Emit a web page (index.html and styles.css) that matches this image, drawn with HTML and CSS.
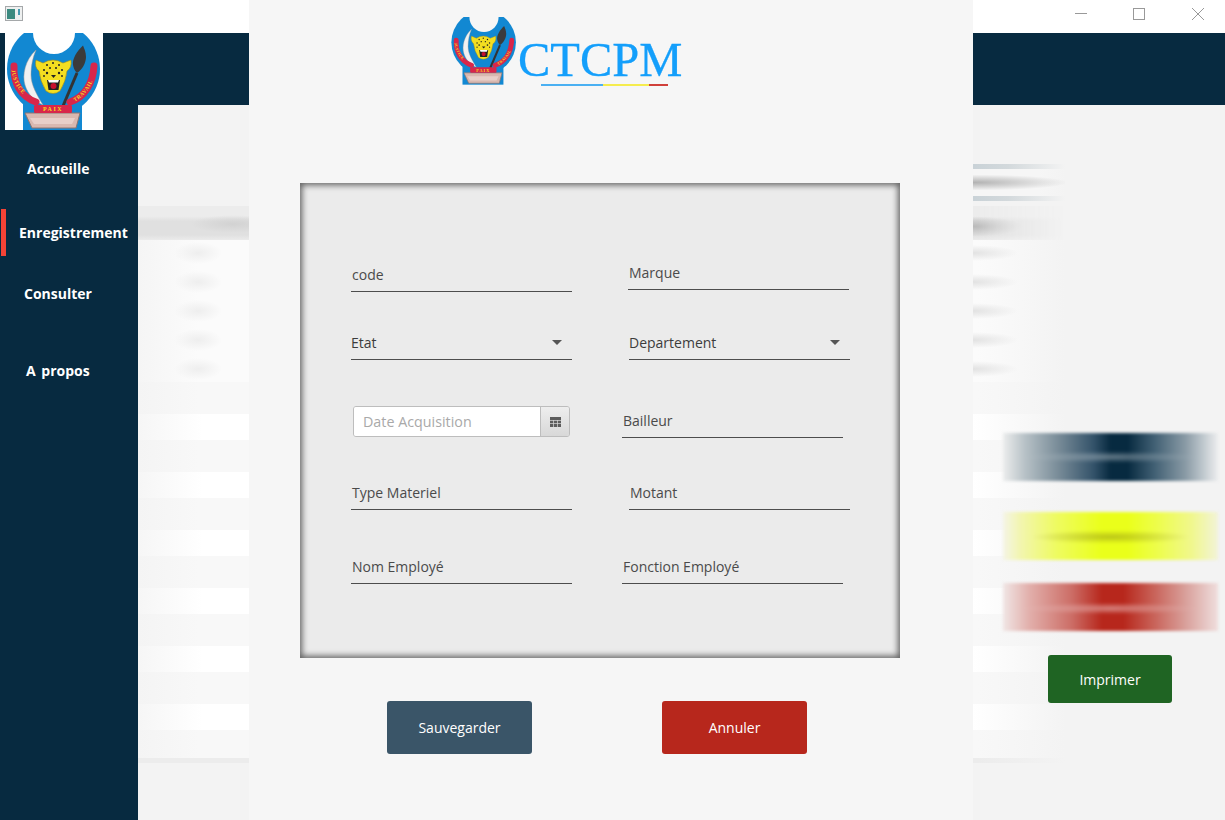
FILE: index.html
```html
<!DOCTYPE html>
<html lang="fr">
<head>
<meta charset="utf-8">
<title>CTCPM</title>
<link rel="stylesheet" href="styles.css">
</head>
<body>
<svg class="defs" width="0" height="0" aria-hidden="true">
  <defs>
    <path id="arc-l" d="M6.500 34C6.500 50 16 63 30 69" fill="none"/>
    <path id="arc-r" d="M66 70.500C80 65 90 50 91 34" fill="none"/>
    <g id="emblem-art">
      <rect x="18" y="70" width="59" height="27" fill="#1288d2"/>
      <circle cx="48.500" cy="36" r="46.500" fill="#1288d2"/>
      <circle class="notch" cx="49" cy="0" r="21"/>
      <path d="M31 17C20 27 17 42 20 52C23 62 30 68 38 72C32 62 26 52 26 42C26 32 28 24 31 17Z" fill="#f1f1f1" stroke="#9a9a9a" stroke-width=".5"/>
      <path d="M72 40L58 73" stroke="#333" stroke-width="3"/>
      <path d="M78 12.500C72 18 67 26 68 32C69 37 71 39 72 40C77 37 81 30 81 24C81 19 79 15 78 12.500Z" fill="#3b3b3b"/>
      <path d="M31 27L38 30Q48 24 58 30L66 27Q67 35 62 38Q61 48 55 58Q48 63 41 58Q35 48 34 38Q29 34 31 27Z" fill="#f3de20" stroke="#9a8a20" stroke-width=".6"/>
      <g fill="#222">
        <circle cx="42" cy="32" r="1"/><circle cx="48" cy="30" r="1"/><circle cx="54" cy="32" r="1"/>
        <circle cx="39" cy="37" r="1"/><circle cx="45" cy="35" r="1"/><circle cx="51" cy="35" r="1"/><circle cx="57" cy="37" r="1"/>
        <circle cx="39" cy="43" r=".9"/><circle cx="57" cy="43" r=".9"/><circle cx="42" cy="40" r="1.200"/><circle cx="54" cy="40" r="1.200"/>
        <path d="M46 42h5l-2.500 3Z"/>
        <path d="M42 47h13l-1.500 10h-10Z"/>
      </g>
      <circle cx="48.500" cy="53" r="3" fill="#c8102e"/>
      <path d="M43 47h11l-1 2.500h-9Z" fill="#fff"/>
      <path d="M9 33C8 50 16 64 31 69" fill="none" stroke="#d8264a" stroke-width="7" stroke-linecap="round"/>
      <path d="M65 69C80 64 88 50 89 33" fill="none" stroke="#d8264a" stroke-width="7" stroke-linecap="round"/>
      <path d="M20 80H75L71 95H27Z" fill="#d9b8b0" stroke="#8f7570" stroke-width="1"/>
      <path d="M25 85H70L67 91H29Z" fill="#e8cfc9"/>
      <rect x="29" y="72" width="38" height="8" rx="1.500" fill="#d8264a"/>
    </g>
  </defs>
</svg>

<header class="titlebar">
  <svg class="app-icon" viewBox="0 0 18 15"><rect x=".5" y=".5" width="17" height="14" fill="#eef0f0" stroke="#a5a8aa"/><rect x="2" y="3" width="8" height="10" fill="#3c8a80"/><rect x="13" y="3" width="2" height="6" fill="#4a9ab0"/></svg>
  <div class="controls">
    <svg class="ctl" viewBox="0 0 12 12"><path d="M0 5.500H12" stroke="#999"/></svg>
    <svg class="ctl" viewBox="0 0 12 12"><rect x=".5" y=".5" width="11" height="11" fill="none" stroke="#999"/></svg>
    <svg class="ctl ctl-close" viewBox="0 0 12 12"><path d="M0 0L12 12M12 0L0 12" stroke="#999" fill="none"/></svg>
  </div>
</header>

<div class="app">
  <aside class="sidebar">
    <div class="logo">
      <svg class="logo-svg" viewBox="0 0 98 97">
        <use href="#emblem-art"/>
        <text class="motto"><textPath href="#arc-l" startOffset="3">JUSTICE</textPath></text>
        <text class="motto"><textPath href="#arc-r" startOffset="4">TRAVAIL</textPath></text>
        <text class="paix" x="48" y="78.200">PAIX</text>
      </svg>
    </div>
    <nav class="nav">
      <a class="nav-item nav-home">Accueille</a>
      <a class="nav-item nav-save is-active">Enregistrement</a>
      <a class="nav-item nav-view">Consulter</a>
      <a class="nav-item nav-about">A propos</a>
    </nav>
  </aside>

  <main class="main">
    <div class="band"></div>
    <div class="content">
      <div class="table">
        <div class="t-line"></div>
        <div class="t-head-a"></div>
        <div class="t-line"></div>
        <div class="t-head"></div>
        <div class="t-rows">
          <div class="t-row smudge"></div><div class="t-row smudge"></div>
          <div class="t-row smudge"></div><div class="t-row smudge"></div>
          <div class="t-row smudge"></div><div class="t-row"></div>
          <div class="t-row"></div><div class="t-row"></div>
          <div class="t-row"></div><div class="t-row"></div>
          <div class="t-row"></div><div class="t-row"></div>
          <div class="t-row"></div><div class="t-row"></div>
          <div class="t-row"></div><div class="t-row"></div>
          <div class="t-row"></div><div class="t-row"></div>
        </div>
        <div class="t-foot"></div>
      </div>
      <div class="side">
        <div class="blur-bar bar-navy"></div>
        <div class="blur-bar bar-yellow"></div>
        <div class="blur-bar bar-red"></div>
        <button class="btn btn-print">Imprimer</button>
      </div>
    </div>
  </main>
</div>

<section class="dialog">
  <div class="brand">
    <svg class="brand-emblem" viewBox="0 0 98 97">
      <use href="#emblem-art"/>
      <text class="motto"><textPath href="#arc-l" startOffset="3">JUSTICE</textPath></text>
      <text class="motto"><textPath href="#arc-r" startOffset="4">TRAVAIL</textPath></text>
      <text class="paix" x="48" y="78.200">PAIX</text>
    </svg>
    <div class="brand-text">
      <div class="brand-name">CTCPM</div>
      <div class="flag"><span class="flag-b"></span><span class="flag-y"></span><span class="flag-r"></span></div>
    </div>
  </div>

  <div class="panel">
    <div class="form">
      <div class="field"><span class="txt">code</span></div>
      <div class="field f-row1r"><span class="txt">Marque</span></div>

      <div class="field f-select"><span class="txt txt-flush">Etat</span><i class="caret"></i></div>
      <div class="field f-select f-col2b"><span class="txt txt-flush">Departement</span><i class="caret"></i></div>

      <div class="date">
        <span class="date-input">Date Acquisition</span>
        <span class="date-btn"><svg class="cal" viewBox="0 0 11 10"><path d="M0 0h11v10H0Z" fill="#5c5c5c"/><path d="M0 3.500h11M0 6.500h11M3.500 3v7M7.500 3v7" stroke="#d8d8d8" stroke-width=".7"/></svg></span>
      </div>
      <div class="field"><span class="txt">Bailleur</span></div>

      <div class="field"><span class="txt">Type Materiel</span></div>
      <div class="field f-col2a"><span class="txt">Motant</span></div>

      <div class="field"><span class="txt">Nom Employé</span></div>
      <div class="field"><span class="txt">Fonction Employé</span></div>
    </div>
  </div>

  <div class="actions">
    <button class="btn btn-save">Sauvegarder</button>
    <button class="btn btn-cancel">Annuler</button>
  </div>
</section>
</body>
</html>
```

FILE: styles.css
```css
* { box-sizing: border-box; }
html, body { margin: 0; padding: 0; }
body {
  position: relative;
  width: 1225px;
  height: 820px;
  overflow: hidden;
  display: flex;
  flex-direction: column;
  background: #f3f3f3;
  font-family: "Open Sans", "Noto Sans", sans-serif;
  font-size: 14px;
  color: #4a4a4a;
}
.defs { position: absolute; }

/* title bar */
.titlebar {
  flex: 0 0 33px;
  display: flex;
  align-items: flex-start;
  justify-content: space-between;
  background: #fff;
  padding: 6px 21px 0 5px;
}
.app-icon { width: 18px; height: 15px; }
.controls { display: flex; gap: 46px; padding-top: 2px; }
.ctl { width: 12px; height: 12px; display: block; }
.ctl-close { margin-left: 1px; }

/* shell */
.app { flex: 1; display: flex; min-height: 0; }
.sidebar {
  flex: 0 0 138px;
  background: #072a40;
  display: flex;
  flex-direction: column;
}
.logo {
  width: 98px;
  height: 97px;
  margin-left: 5px;
  background: #fff;
  --notch: #fff;
}
.logo-svg { width: 98px; height: 97px; display: block; }
.notch { fill: var(--notch); }
.motto { font: bold 5.500px "Liberation Serif", serif; fill: #f3de20; letter-spacing: .6px; }
.paix { font: bold 6px "Liberation Serif", serif; fill: #f3de20; letter-spacing: 1.500px; text-anchor: middle; }

.nav { display: flex; flex-direction: column; padding-top: 15px; }
.nav-item {
  height: 47px;
  display: flex;
  align-items: center;
  color: #fff;
  font-weight: 700;
  font-size: 14px;
}
.nav-home { padding-left: 27px; margin-bottom: 17px; }
.nav-save { padding-left: 19px; margin-bottom: 14px; }
.nav-view { padding-left: 24px; margin-bottom: 30px; }
.nav-about { padding-left: 26px; word-spacing: 2px; }
.is-active { box-shadow: inset 1px 0 0 #072a40, inset 6px 0 0 #f44336; }

.main { flex: 1; display: flex; flex-direction: column; min-width: 0; }
.band { flex: 0 0 72px; background: #072a40; }
.content { flex: 1; display: grid; grid-template-columns: 1fr; grid-template-rows: 1fr; background: #f3f3f3; }

/* blurred table behind the dialog */
.table { grid-area: 1 / 1; width: 927px; margin-top: 59px; display: flex; flex-direction: column; }
.t-line { height: 5px; background: linear-gradient(90deg, transparent 740px, #c9d2d7 835px, #d3d9dc 870px, transparent 927px); }
.t-head-a {
  height: 27px;
  background: radial-gradient(ellipse 95px 8px at 835px 50%, #b2b2b2, transparent), linear-gradient(90deg, transparent 780px, #f6f6f6 835px, #f6f6f6 900px, transparent 927px);
}
.t-head {
  height: 34px;
  margin-top: 5px;
  background:
    radial-gradient(ellipse 50px 10px at 835px 60%, #bababa, transparent),
    radial-gradient(ellipse 42px 9px at 95px 53%, #d2d2d2, transparent),
    linear-gradient(180deg, #ececec 0, #ececec 30%, #e0e0e0 45%, #e0e0e0 85%, #ebebeb 100%);
  -webkit-mask-image: linear-gradient(90deg, #000 0, #000 840px, transparent 927px);
  mask-image: linear-gradient(90deg, #000 0, #000 840px, transparent 927px);
}
.t-rows { display: flex; flex-direction: column; }
.t-row { height: 32px; background: linear-gradient(90deg, #f4f4f4 0, #f8f8f8 60px, #f8f8f8 840px, #f3f3f3 927px); }
.t-row:nth-child(odd) { height: 26px; background: linear-gradient(90deg, #f6f6f6 0, #fff 65px, #fff 835px, #f3f3f3 927px); }
.t-row:last-child { height: 28px; }
.t-row.smudge {
  background:
    radial-gradient(ellipse 24px 11px at 60px 50%, #eeeeee, transparent),
    radial-gradient(ellipse 45px 8px at 835px 50%, #e2e2e2, transparent),
    linear-gradient(90deg, #f5f5f5 0, #fbfbfb 60px, #fbfbfb 840px, #f3f3f3 927px);
}
.t-foot { height: 5px; background: linear-gradient(90deg, #ececec 0, #ececec 840px, #f3f3f3 927px); }

/* right column */
.side {
  grid-area: 1 / 1;
  justify-self: end;
  width: 215px;
  margin-right: 7px;
  padding-top: 328px;
  display: flex;
  flex-direction: column;
  align-items: center;
}
.blur-bar { width: 100%; height: 48px; filter: blur(1.500px); }
.bar-navy {
  background:
    radial-gradient(ellipse 90px 6px at 50% 50%, rgba(190, 200, 206, .5), transparent),
    linear-gradient(90deg, #eceded 0, #b8c2c7 10%, #7b8e9a 25%, #34536a 42%, #072a40 50%, #072a40 58%, #3f5e72 70%, #8a9ba6 85%, #c5cdd2 94%, #ecedee 100%);
}
.bar-yellow {
  margin-top: 31px;
  background:
    radial-gradient(ellipse 80px 7px at 50% 52%, rgba(140, 140, 20, .5), transparent),
    linear-gradient(90deg, #f4f4e6 0, #f2f5b0 8%, #eefb60 25%, #eaff1a 46%, #eaff1a 58%, #edfd4c 72%, #f0f78e 88%, #f2f3d8 100%);
}
.bar-red {
  margin-top: 23px;
  background:
    radial-gradient(ellipse 90px 6px at 50% 53%, rgba(240, 205, 205, .55), transparent),
    linear-gradient(90deg, #f0e6e5 0, #e2b0ac 12%, #cc6d66 32%, #b7271c 46%, #b7271c 56%, #c6594f 68%, #d9a09b 85%, #efdedd 100%);
}

/* buttons */
.btn {
  border: 0;
  border-radius: 3px;
  color: #fff;
  font: 14px "Open Sans", "Noto Sans", sans-serif;
  padding: 0;
}
.btn-print { width: 124px; height: 48px; margin: 24px 1px 0 0; background: #1f6423; }
.btn-save { width: 145px; height: 53px; background: #3a5568; }
.btn-cancel { width: 145px; height: 53px; background: #b7271c; }

/* dialog */
.dialog {
  position: absolute;
  left: 249px;
  top: 0;
  width: 724px;
  height: 820px;
  background: #f6f6f6;
  padding: 17px 51px 0;
  --notch: #f6f6f6;
}
.brand { height: 166px; display: flex; align-items: flex-start; padding-left: 150px; }
.brand-emblem { width: 68px; height: 68px; display: block; flex: none; }
.brand-text { padding-top: 20px; }
.brand-name { font: 48.500px/46px "Liberation Serif", serif; color: #149ffb; -webkit-text-stroke: .3px #149ffb; }
.flag { display: flex; height: 2px; margin: 1px 0 0 23px; }
.flag-b { width: 62px; background: #4ab0f2; }
.flag-y { width: 46px; background: #f5ec4e; }
.flag-r { width: 19px; background: #d0403a; }

.panel {
  width: 600px;
  height: 475px;
  background: #ebebeb;
  box-shadow: inset 0 0 6px 2px rgba(0, 0, 0, .6);
  padding: 79px 0 0 51px;
}
.form {
  display: grid;
  grid-template-columns: 221px 221px;
  column-gap: 50px;
  grid-template-rows: 30px 68px 78px 72px 74px;
  align-items: end;
}
.field {
  height: 30px;
  padding-bottom: 3px;
  border-bottom: 1px solid #4d4d4d;
  display: flex;
  align-items: center;
  justify-content: space-between;
}
.txt { padding-left: 1px; line-height: 26px; }
.txt-flush { padding-left: 0; color: #3c3c3c; }
.f-row1r { margin: 0 -6px 2px 6px; }
.f-col2a { margin: 0 -7px 0 7px; }
.f-col2b { margin: 0 -7px 0 7px; }
.f-select { padding-right: 10px; padding-bottom: 4px; }
.caret {
  width: 0;
  height: 0;
  border-left: 5px solid transparent;
  border-right: 5px solid transparent;
  border-top: 5px solid #555;
}
.date {
  height: 31px;
  width: 217px;
  margin: 0 0 1px 2px;
  display: flex;
  border: 1px solid #bdbdbd;
  border-radius: 3px;
  overflow: hidden;
}
.date-input {
  flex: 1;
  background: #fff;
  color: #a9a9a9;
  padding-left: 9px;
  line-height: 29px;
  font-size: 14.300px;
}
.date-btn {
  flex: 0 0 29px;
  border-left: 1px solid #bdbdbd;
  background: linear-gradient(180deg, #eeeeee, #d8d8d8);
  display: flex;
  align-items: center;
  justify-content: center;
}
.cal { width: 11px; height: 10px; display: block; }

.actions { display: flex; gap: 130px; padding: 43px 0 0 87px; }
```
